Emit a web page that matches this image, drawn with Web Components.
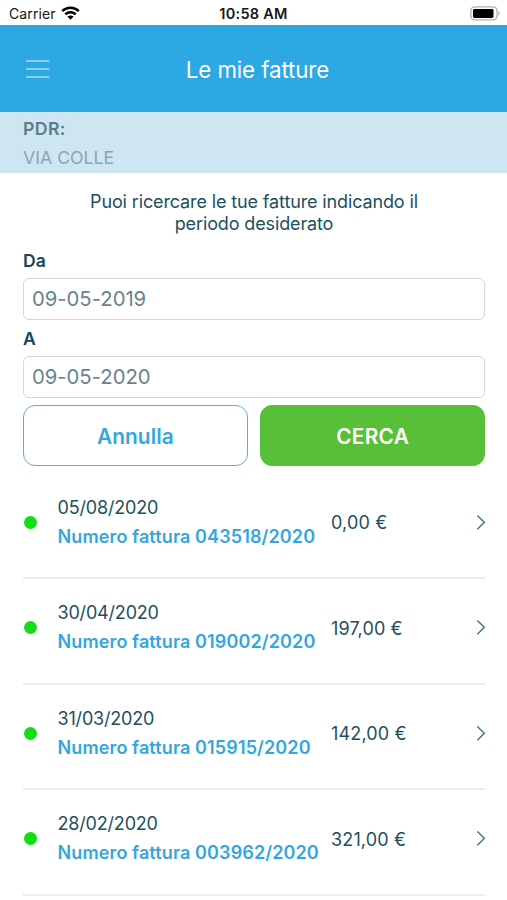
<!DOCTYPE html>
<html lang="it">
<head>
<meta charset="utf-8">
<title>Le mie fatture</title>
<style>
body { margin: 0; background: #fff; font-family: Inter, "Liberation Sans", sans-serif; color: #1d4f5e; }
</style>
</head>
<body>
<invoice-app></invoice-app>
<script>
function define(name, html, setup) {
  const template = document.createElement('template');
  template.innerHTML = html;
  customElements.define(name, class extends HTMLElement {
    constructor() {
      super();
      this.attachShadow({ mode: 'open' }).append(template.content.cloneNode(true));
    }
    connectedCallback() {
      if (setup) setup(this, this.shadowRoot);
    }
  });
}

define('status-bar', `
<style>
:host { display: grid; grid-template-columns: 1fr auto 1fr; align-items: center; height: 25px; padding: 2px 6px 0 9px; box-sizing: border-box; color: #161616; font-size: 14px; line-height: 23px; }
.left { display: flex; align-items: center; gap: 6px; letter-spacing: .1px; }
.time { font-size: 14.5px; font-weight: 600; letter-spacing: .25px; padding-right: 3px; }
.wifi { display: block; margin: -2px 0 0 -1px; }
.battery { display: block; justify-self: end; margin-top: -1px; }
</style>
<div class="left"><span>Carrier</span>
<svg class="wifi" width="19" height="14" viewBox="0 0 19 14" fill="none" stroke="#000" stroke-width="2.5"><path d="M1.2 5.1C5.9.6 13.1.6 17.8 5.1"/><path d="M4.3 8.4C7.3 5.6 11.7 5.6 14.7 8.4"/><path d="M9.5 13.7 6.4 10.6C8.1 9 10.9 9 12.6 10.6Z" fill="#000" stroke="none"/></svg></div>
<span class="time">10:58 AM</span>
<svg class="battery" width="31" height="15" viewBox="0 0 31 15"><rect x=".9" y=".9" width="26.2" height="13" rx="3.8" fill="#fff" stroke="#b1b1b1" stroke-width="1.4"/><rect x="3" y="3" width="20.5" height="9" rx="1.4" fill="#000"/><path d="M28.5 5.2Q31 7.4 28.5 9.7Z" fill="#aaa"/></svg>
`);

define('nav-header', `
<style>
:host { display: grid; grid-template-columns: 1fr auto 1fr; align-items: center; height: 87px; padding: 0 20px 0 26px; background: #2ca8e3; color: #fff; box-sizing: border-box; }
svg { display: block; }
h1 { margin: 0; padding: 2px 0 0 2px; font-size: 22.3px; letter-spacing: -.1px; font-weight: 400; line-height: 28px; }
</style>
<svg width="24" height="20" viewBox="0 0 24 20" stroke="#a9dcf8" stroke-width="1.5"><path d="M0 2H23.3M0 10H23.3M0 18H23.3"/></svg>
<h1><slot></slot></h1><span></span>
`);

define('supply-point', `
<style>
:host { display: block; height: 61px; padding: 2px 23px 0; box-sizing: border-box; background: #cee6f2; line-height: 29px; }
.label { font-size: 17.7px; letter-spacing: .35px; font-weight: 600; color: #5c7c87; }
.value { font-size: 17.7px; color: #8fa4ad; }
</style>
<div class="label"><slot name="label"></slot></div>
<div class="value"><slot></slot></div>
`);

define('date-field', `
<style>
:host { display: block; }
label { display: block; height: 36.5px; line-height: 38px; font-size: 17.5px; font-weight: 600; color: #114657; }
.box { height: 41.5px; box-sizing: border-box; border: 1.5px solid #d6d6d6; border-radius: 6px; padding-left: 8px; line-height: 40px; font-size: 20.3px; letter-spacing: -.03px; color: #66858a; }
</style>
<label></label><div class="box"><slot></slot></div>
`, (host, root) => { root.querySelector('label').textContent = host.getAttribute('label'); });

define('action-button', `
<style>
:host { display: block; }
button { all: unset; display: block; width: 100%; height: 61px; box-sizing: border-box; border: 1.5px solid #4fb4e4; border-radius: 12px; text-align: center; font-size: 20.8px; letter-spacing: .1px; line-height: 61px; font-weight: 600; color: #34a6df; background: #fff; }
:host([primary]) button { background: #58bf39; border-color: #58bf39; color: #fff; letter-spacing: .3px; }
</style>
<button><slot></slot></button>
`);

define('invoice-row', `
<style>
:host { display: grid; grid-template-columns: 34.5px 273.5px 1fr auto; height: 105.5px; box-sizing: border-box; border-bottom: 2px solid #ececee; align-items: start; }
.dot { width: 13px; height: 13px; border-radius: 50%; background: #12dd15; margin: 42.2px 0 0 1px; }
.text { padding-top: 19.2px; line-height: 29.3px; font-size: 18px; white-space: nowrap; }
.date { letter-spacing: -.18px; }
.number { color: #34a6df; font-weight: 600; letter-spacing: .12px; }
.amount { padding-top: 34.8px; line-height: 29px; font-size: 18px; letter-spacing: .15px; }
svg { display: block; margin: 40.2px -1px 0 0; }
</style>
<span class="dot"></span>
<div class="text"><div class="date"></div><div class="number"></div></div>
<div class="amount"></div>
<svg width="10" height="17" viewBox="0 0 10 17" fill="none" stroke="#45727a" stroke-width="1.4"><path d="M1.4 1.4 8.3 8.3 1.4 15.3"/></svg>
`, (host, root) => {
  for (const key of ['date', 'number', 'amount']) root.querySelector('.' + key).textContent = host.getAttribute(key);
});

define('invoice-app', `
<style>
:host { display: block; height: 900px; overflow: hidden; }
p { margin: 0; padding: 18px 0 6.5px; text-align: center; font-size: 18px; letter-spacing: -.13px; line-height: 22px; }
main { padding: 0 22px 0 23px; }
.fields { display: grid; }
.buttons { display: grid; grid-template-columns: 1fr 1fr; gap: 12.5px; padding-top: 7.5px; }
.list { padding-top: 7.5px; }
</style>
<status-bar></status-bar>
<nav-header>Le mie fatture</nav-header>
<supply-point><span slot="label">PDR:</span>VIA COLLE</supply-point>
<main>
<p>Puoi ricercare le tue fatture indicando il<br>periodo desiderato</p>
<div class="fields"><date-field label="Da">09-05-2019</date-field><date-field label="A">09-05-2020</date-field></div>
<div class="buttons"><action-button>Annulla</action-button><action-button primary>CERCA</action-button></div>
<div class="list">
<invoice-row date="05/08/2020" number="Numero fattura 043518/2020" amount="0,00 €"></invoice-row>
<invoice-row date="30/04/2020" number="Numero fattura 019002/2020" amount="197,00 €"></invoice-row>
<invoice-row date="31/03/2020" number="Numero fattura 015915/2020" amount="142,00 €"></invoice-row>
<invoice-row date="28/02/2020" number="Numero fattura 003962/2020" amount="321,00 €"></invoice-row>
</div>
</main>
`);
</script>
</body>
</html>
